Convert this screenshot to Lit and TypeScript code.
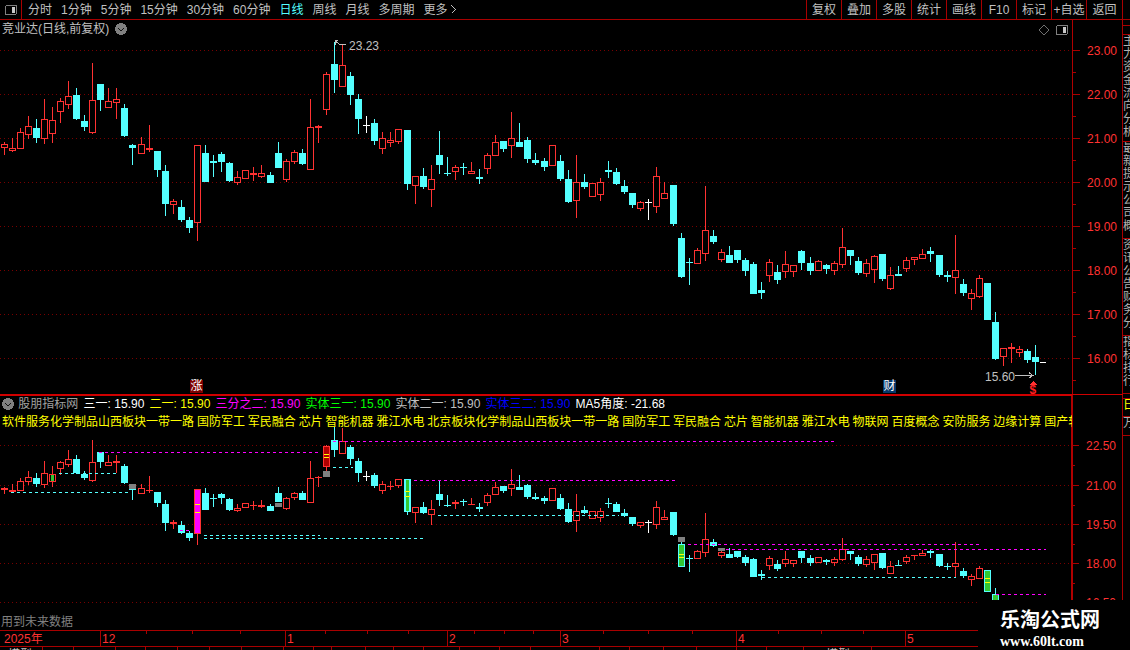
import { LitElement, html, css, svg } from "lit";
import { customElement } from "lit/decorators.js";

type Kind = "r" | "c" | "w";
interface Candle { i: number; k: Kind; hi: number; top: number; bot: number; lo: number; }

/* values read at 3x, relative to a base row */
const BLOCKS: [number, string][] = [
  [55, "r262,268,278,300 r250,280,287,291 r220,232,281,281 r184,214,240,252 c192,219,249,264 r133,193,251,267 r156,196,236,264 r130,139,170,204 r78,124,151,162 c99,120,192,195 c180,198,216,228 r24,136,233,237 c87,87,135,168 r99,139,158,158 r99,133,143,192 c148,159,243,246 c267,270,279,330 r246,268,296,296 r210,279,285,291 c288,288,345,366 c330,348,447,483 r432,439,449,477 c435,456,495,500 c487,495,519,534 r271,271,503,558 c270,294,381,381 c300,318,324,366 c291,297,321,351 c321,324,378,382 r348,367,383,390 r346,346,371,371 r336,354,360,378"],
  [35, "r390,415,425,428 c411,420,444,444 c321,354,399,399 r373,378,435,441 r346,352,380,387 c342,354,387,390 r192,277,404,404 r270,274,279,324 r112,118,224,240 c20,87,135,174 r27,91,155,155 c111,123,180,210 c178,192,252,297 w243,270,272,294 c252,264,318,330 r291,310,341,357 r291,316,323,336 r283,283,320,327 c285,285,447,465 r424,424,452,507 c399,423,456,462 r390,433,464,516 c288,360,390,417 c366,414,417,423 r390,397,410,435 c384,396,399,420 r381,408,416,416 c402,426,432,447 r354,361,402,417 r300,322,362,362 c318,318,342,351 r231,310,332,369 c264,321,336,336"],
  [110, "c82,90,147,159 c129,150,159,165 c144,153,171,183 r105,105,167,167 c135,153,207,213 c180,207,276,279 r135,217,272,324 c192,216,231,237 r219,219,260,260 r204,217,254,273 c153,180,186,204 c174,186,222,225 c210,228,246,252 c249,249,285,294 r273,277,296,303 w267,276,278,330 r171,199,290,309 r216,250,266,266 c225,225,342,348 c369,384,501,504 c444,456,459,525 r414,421,461,461 r228,361,431,453 c360,378,396,402 r417,427,449,456 c408,435,459,459 c420,420,450,459 c444,450,483,498 c456,462,552,552 c516,540,549,567 r447,457,497,516 c465,486,510,522"],
  [220, "r93,133,155,174 r136,136,155,171 c90,93,129,150 c111,129,153,165 r120,124,153,153 c132,135,147,162 r124,130,153,165 r24,82,135,144 c90,90,108,135 c111,123,159,165 r117,130,162,171 r105,109,150,189 c102,102,177,183 r141,166,207,210 c138,162,168,168 r111,121,147,156 r111,112,119,135 r87,103,117,117 c81,93,102,126 c105,105,165,171 c153,165,171,186 r45,151,174,222 c177,192,219,228 r207,220,236,270 r165,175,231,234 c189,189,300,300 c276,306,417,420 r385,385,411,438 r369,381,387,429 r378,388,399,411 c387,393,420,429 c375,411,426,465"],
];

const JUMPS = [17, 33, 50, 67, 83, 100, 116];
const candleX = (i: number) => 4 + 8 * i + JUMPS.filter((j) => i >= j).length;

const CANDLES: Candle[] = [];
for (const [base, rows] of BLOCKS) {
  for (const tok of rows.split(" ")) {
    const [hi, top, bot, lo] = tok.slice(1).split(",").map((v) => base + Number(v) / 3);
    CANDLES.push({ i: CANDLES.length, k: tok[0] as Kind, hi, top, bot, lo });
  }
}

const lowerY = (y: number) => 445 + (y - 72) * 0.594;

const candleMarkup = (c: Candle, map: (y: number) => number) => {
  const x = candleX(c.i);
  const hi = Math.round(map(c.hi));
  const top = Math.round(map(c.top));
  const bot = Math.max(Math.round(map(c.bot)), top + 1);
  const lo = Math.round(map(c.lo));
  const parts = [];
  if (top > hi) parts.push(svg`<rect class="f-${c.k}" x=${x} y=${hi} width="1" height=${top - hi}></rect>`);
  if (lo > bot) parts.push(svg`<rect class="f-${c.k}" x=${x} y=${bot} width="1" height=${lo - bot}></rect>`);
  const h = bot - top;
  if (c.k !== "r" || h <= 2) {
    parts.push(svg`<rect class="f-${c.k}" x=${x - 3} y=${top} width="7" height=${h}></rect>`);
  } else {
    parts.push(svg`<rect class="o-r" x=${x - 2.5} y=${top + 0.5} width="6" height=${h - 1}></rect>`);
  }
  return parts;
};

const MAIN_GRID = [50, 94, 138, 182, 226, 270, 314, 358];
const LOWER_GRID = [445, 485, 524, 563, 602];
const MAIN_AXIS: [number, string][] = [[50, "23.00"], [94, "22.00"], [138, "21.00"], [182, "20.00"], [226, "19.00"], [270, "18.00"], [314, "17.00"], [358, "16.00"]];
const LOWER_AXIS: [number, string][] = [[445, "22.50"], [485, "21.00"], [524, "19.50"], [563, "18.00"], [602, "16.50"]];

/* x1, x2, y, class */
const DASHES: [number, number, number, string][] = [
  [11, 130, 492, "d-c"], [59, 119, 473, "d-c"], [99, 321, 452, "d-m"], [333, 836, 441, "d-m"],
  [204, 320, 535, "d-c"], [204, 425, 538, "d-c"], [180, 191, 530, "d-m"], [333, 353, 467, "d-c"],
  [414, 675, 480, "d-m"], [438, 619, 515, "d-c"], [688, 981, 544, "d-m"], [720, 1046, 549, "d-m"],
  [762, 956, 577, "d-c"], [996, 1046, 594, "d-m"],
];

/* candle index, inner width, fill class, yellow tick rows */
const FILLS: [number, number, string, number[]][] = [
  [24, 5, "f-m", [504, 512]], [40, 5, "f-d", [454, 457]], [50, 3, "f-g", [491, 496]],
  [84, 5, "f-g", [554, 557]], [122, 5, "f-g", [578, 582]], [123, 5, "f-g", []], [6, 3, "f-g", []],
];

/* candle index, top, height */
const GREYS: [number, number, number][] = [[16, 484, 5], [40, 471, 6], [34, 503, 4], [84, 537, 5], [89, 548, 3]];

const MONTHS: [number, string][] = [[100, "12"], [285, "1"], [447, "2"], [560, "3"], [736, "4"], [905, "5"]];
const TICKS = [146, 192, 240, 325, 367, 408, 474, 504, 533, 603, 648, 692, 778, 821, 863];
const FOOT_TICKS = [42, 73, 115, 145, 177, 209, 241, 283, 313, 331, 365, 393, 423, 459, 499, 530, 599, 629, 663, 696, 736, 766, 803, 840, 871];

const NAV = ["分时", "1分钟", "5分钟", "15分钟", "30分钟", "60分钟", "日线", "周线", "月线", "多周期"];
const TOOLS = ["复权", "叠加", "多股", "统计", "画线", "F10", "标记", "+自选", "返回"];
const LEGEND: [string, string][] = [
  ["三一: 15.90", "white"], ["二一: 15.90", "yellow"], ["三分之二: 15.90", "magenta"],
  ["实体三一: 15.90", "lime"], ["实体二一: 15.90", "grey"], ["实体三二: 15.90", "blue"], ["MA5角度: -21.68", "white"],
];
const CONCEPTS = "软件服务化学制品山西板块一带一路 国防军工 军民融合 芯片 智能机器 雅江水电 北京板块化学制品山西板块一带一路 国防军工 军民融合 芯片 智能机器 雅江水电 物联网 百度概念 安防服务 边缘计算 国产软件";
const STRIP: [number, string, string][] = [
  [6, "", ""], [9, "", ""], [107, "主力资金流向分析", ""], [97, "最新提示公司概", ""], [97, "资讯公告财务分", ""], [58, "指标排行", ""],
  [5, "", ""], [18, "日", "gold"], [19, "万", ""],
];

const panelIcon = (cls: string) => html`<svg class=${cls} viewBox="0 0 12 10" width="12" height="10">
  <rect x="0.5" y="0.5" width="11" height="9" rx="1.5" fill="#000" stroke="#808080"></rect>
  <rect x="7" y="2" width="3" height="6" fill="#c8c8c8"></rect>
</svg>`;

const roundIcon = (cls: string) => html`<svg class=${cls} viewBox="0 0 12 12" width="12" height="12">
  <circle cx="6" cy="6" r="6" fill="#808080"></circle>
  <path d="M3 5 L6 8 L9 5" fill="none" stroke="#111" stroke-width="1.4"></path>
</svg>`;

@customElement("app-root")
export class AppRoot extends LitElement {
  static styles = css`
    :host {
      display: block; position: relative; width: 1130px; height: 650px; overflow: hidden;
      background: #000; color: #c0c0c0;
      font: 12px/14px "Liberation Sans", "Noto Sans CJK SC", sans-serif;
    }
    svg { display: block; shape-rendering: crispEdges; }
    svg text { shape-rendering: auto; font: 12px "Liberation Sans", "Noto Sans CJK SC", sans-serif; }

    .toolbar { display: flex; align-items: stretch; height: 19px; border-bottom: 1px solid #a80000; }
    .home { width: 22px; display: flex; align-items: center; justify-content: center; border-right: 1px solid #a80000; box-sizing: border-box; }
    .nav { display: flex; align-items: center; gap: 9px; padding-left: 6px; flex: 1; }
    .nav .on { color: #54ffff; }
    .more { display: flex; align-items: center; gap: 3px; }
    .tools { display: flex; margin-right: 7px; }
    .tool { width: 35px; box-sizing: border-box; border-left: 1px solid #a80000; display: flex; align-items: center; justify-content: center; white-space: nowrap; }
    .tool:last-child { width: 37px; border-right: 1px solid #a80000; }

    .body { display: flex; height: 630px; }
    .charts { width: 1072px; display: flex; flex-direction: column; }
    .panel { position: relative; }
    .main-panel { height: 374px; border-bottom: 2px solid #d00000; }
    .lower-panel { height: 234px; }
    .axis { width: 51px; box-sizing: border-box; border-left: 1px solid #b00000; border-right: 1px solid #a80000; }
    .axis-sep { height: 1px; background: #d00000; margin: 0 -1px; }
    .axis-lower { border-left: 1px solid #b00000; margin-left: -2px; margin-top: 1px; }
    .strip { width: 7px; display: flex; flex-direction: column; overflow: hidden; }
    .cell { box-sizing: border-box; border-bottom: 1px solid #a80000; overflow: hidden; flex: none; }
    .cell span { display: block; width: 12px; line-height: 13px; word-break: break-all; color: #b0b0b0; }
    .cell span.gold { color: #ffff00; }

    .title { position: absolute; left: 2px; top: 2px; display: flex; align-items: center; gap: 6px; }
    .corner { position: absolute; left: 1038px; top: 4px; display: flex; align-items: center; gap: 6px; }
    .corner svg { flex: none; }
    .badge { position: absolute; top: 360px; width: 13px; height: 13px; line-height: 13px; text-align: center; color: #fff; }
    .zhang { left: 190px; background: #7c0000; }
    .cai { left: 883px; background: #06386a; }

    .overlay { position: absolute; left: 0; top: 0; width: 1072px; overflow: hidden; }
    .legend { display: flex; align-items: center; gap: 5.3px; height: 16px; padding-left: 2px; white-space: nowrap; }
    .legend .name { color: #a0a0a0; margin-left: -1px; }
    .white { color: #fff; } .yellow { color: #ffff00; } .magenta { color: #ff00ff; }
    .lime { color: #00ff00; } .grey { color: #c0c0c0; } .blue { color: #0000ff; }
    .concepts { color: #ffff00; white-space: nowrap; word-spacing: -0.45px; padding: 3px 0 0 2px; }
    .future { position: absolute; left: 1px; top: 219px; color: #808080; }

    .f-r, .f-tick { fill: #ff3232; } .f-c { fill: #54ffff; } .f-w { fill: #fff; }
    .o-r { fill: #000; stroke: #ff3232; stroke-width: 1; }
    .f-m { fill: #ff00ff; } .f-d { fill: #b00000; } .f-g { fill: #32c832; } .f-y { fill: #ffff00; } .f-grey { fill: #808080; }
    .grid { stroke: #780000; stroke-width: 1; stroke-dasharray: 1 3; }
    .d-c, .d-m { stroke-width: 1; stroke-dasharray: 3 3; }
    .d-c { stroke: #54ffff; } .d-m { stroke: #ff00ff; }
    .note { fill: #c0c0c0; }
    .note-line { fill: none; stroke: #c0c0c0; stroke-width: 1; }
    .sell { fill: #ff2020; font-weight: bold !important; }
    .rule { fill: #a80000; } .rule-hi { fill: #c80000; }
    .price { fill: #ff3232; }
    .time { fill: #ff3232; }

    .mark {
      position: absolute; left: 978px; top: 600px; width: 152px; height: 50px; background: #000; color: #fff;
      display: flex; flex-direction: column; align-items: flex-start; padding: 7px 0 0 22px; box-sizing: border-box;
    }
    .mark b { font: bold 20px/24px "Noto Sans CJK SC", sans-serif; white-space: nowrap; }
    .mark i { font: bold 14px/17px "Liberation Serif", serif; margin-top: 2px; white-space: nowrap; }
  `;

  private grid(rows: number[]) {
    return rows.map((y) => svg`<line class="grid" x1="0" x2="1072" y1=${y + 0.5} y2=${y + 0.5}></line>`);
  }

  private axis(rows: [number, string][], top: number, height: number, cls: string) {
    const step = (rows[1][0] - rows[0][0]) / 2;
    return html`<svg class=${cls} viewBox="0 ${top} 50 ${height}" width="50" height=${height}>
      ${rows.map(([y, label]) => svg`
        <rect class="rule" x="0" y=${y} width="7" height="1"></rect>
        <rect class="rule" x="0" y=${Math.round(y + step)} width="3" height="1"></rect>
        <text class="price" x="44" y=${y + 5} text-anchor="end">${label}</text>`)}
    </svg>`;
  }

  private mainChart() {
    return html`<svg viewBox="0 20 1072 374" width="1072" height="374">
      ${this.grid(MAIN_GRID)}
      ${CANDLES.map((c) => candleMarkup(c, (y) => y))}
      <path class="note-line" d="M335.5 45 V40.5 H338 M336 41.5 L340 44.5 H346"></path>
      <text class="note" x="349" y="50">23.23</text>
      <text class="note" x="985" y="381">15.60</text>
      <path class="note-line" d="M1015 375.5 H1033 M1029 372.5 L1033 375.5 L1029 378"></path>
      <rect class="f-w" x="1040" y="362" width="6" height="1"></rect>
      <path class="f-r" d="M1033.5 381 L1037 385 H1030 Z"></path>
      <text class="sell" x="1029.5" y="394">$</text>
    </svg>`;
  }

  private lowerChart() {
    return html`<svg viewBox="0 396 1072 234" width="1072" height="234">
      ${this.grid(LOWER_GRID)}
      ${CANDLES.map((c) => candleMarkup(c, lowerY))}
      ${DASHES.map(([a, b, y, cls]) => svg`<line class=${cls} x1=${a} x2=${b} y1=${y + 0.5} y2=${y + 0.5}></line>`)}
      ${FILLS.map(([i, w, cls, ticks]) => {
        const c = CANDLES[i];
        const x = candleX(i);
        const t = Math.round(lowerY(c.top)) + 1;
        const b = Math.round(lowerY(c.bot)) - 1;
        return svg`<rect class=${cls} x=${x - (w - 1) / 2} y=${t} width=${w} height=${Math.max(b - t, 1)}></rect>
          ${ticks.map((y) => svg`<rect class="f-y" x=${x - 2} y=${y} width="5" height="1"></rect>`)}`;
      })}
      ${GREYS.map(([i, y, h]) => svg`<rect class="f-grey" x=${candleX(i) - 3} y=${y} width="7" height=${h}></rect>`)}
    </svg>`;
  }

  private timeAxis() {
    return html`<svg viewBox="0 630 1072 20" width="1072" height="20">
      <rect class="rule" x="0" y="630" width="1072" height="1"></rect>
      <rect class="rule" x="0" y="646" width="1072" height="1"></rect>
      <text class="time" x="4" y="643">2025年</text>
      ${MONTHS.map(([x, label]) => svg`
        <rect class="rule" x=${x} y="630" width="1" height="16"></rect>
        <text class="time" x=${x + 2} y="643">${label}</text>`)}
      ${TICKS.map((x) => svg`<rect class="rule" x=${x} y="631" width="1" height="3"></rect>`)}
      ${FOOT_TICKS.map((x) => svg`<rect class="rule" x=${x} y="647" width="1" height="3"></rect>`)}
      <text class="note" x="8" y="659">模型</text>
      <text class="note" x="826" y="659">模型</text>
    </svg>`;
  }

  render() {
    return html`
      <div class="toolbar">
        <div class="home">${panelIcon("")}</div>
        <div class="nav">
          ${NAV.map((n) => html`<span class=${n === "日线" ? "on" : ""}>${n}</span>`)}
          <span class="more">更多
            <svg viewBox="0 0 5 9" width="5" height="9"><path d="M0.5 0.5 L4.5 4.5 L0.5 8.5" fill="none" stroke="#c0c0c0"></path></svg>
          </span>
        </div>
        <div class="tools">${TOOLS.map((t) => html`<div class="tool">${t}</div>`)}</div>
      </div>
      <div class="body">
        <div class="charts">
          <div class="panel main-panel">
            ${this.mainChart()}
            <div class="title"><span>竞业达(日线,前复权)</span>${roundIcon("")}</div>
            <div class="corner">
              <svg viewBox="0 0 12 12" width="12" height="12"><path d="M6 1 L11 6 L6 11 L1 6 Z" fill="none" stroke="#707070"></path></svg>
              ${panelIcon("")}
            </div>
            <div class="badge zhang">涨</div>
            <div class="badge cai">财</div>
          </div>
          <div class="panel lower-panel">
            ${this.lowerChart()}
            <div class="overlay">
              <div class="legend">
                ${roundIcon("")}<span class="name">股朋指标网</span>
                ${LEGEND.map(([t, c]) => html`<span class=${c}>${t}</span>`)}
              </div>
              <div class="concepts">${CONCEPTS}</div>
            </div>
            <div class="future">用到未来数据</div>
          </div>
          ${this.timeAxis()}
        </div>
        <div class="axis">
          ${this.axis(MAIN_AXIS, 20, 374, "")}
          <div class="axis-sep"></div>
          ${this.axis(LOWER_AXIS, 396, 234, "axis-lower")}
        </div>
        <div class="strip">
          ${STRIP.map(([h, t, c]) => html`<div class="cell" style="height:${h}px"><span class=${c}>${t}</span></div>`)}
        </div>
      </div>
      <div class="mark"><b>乐淘公式网</b><i>www.60lt.com</i></div>
    `;
  }
}
